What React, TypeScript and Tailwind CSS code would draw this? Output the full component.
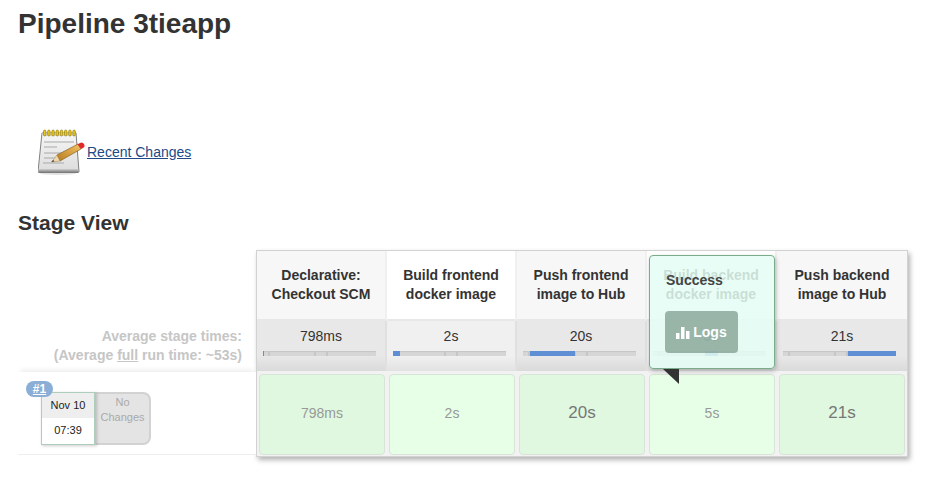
import React from "react";

const stages = [
  { name: ["Declarative:", "Checkout SCM"], avg: "798ms", blue: [0, 1], light: false, run: "798ms", big: false, cell: "bg-[#dff8df]" },
  { name: ["Build frontend", "docker image"], avg: "2s", blue: [0, 7], light: true, run: "2s", big: false, cell: "bg-[#e6ffe6]" },
  { name: ["Push frontend", "image to Hub"], avg: "20s", blue: [7, 52], light: false, run: "20s", big: true, cell: "bg-[#dff8df]" },
  { name: ["Build backend", "docker image"], avg: "5s", blue: [52, 65], light: true, run: "5s", big: false, cell: "bg-[#e6ffe6]" },
  { name: ["Push backend", "image to Hub"], avg: "21s", blue: [65, 113], light: false, run: "21s", big: true, cell: "bg-[#dff8df]" },
];

function Notepad() {
  return (
    <svg width="48" height="48" viewBox="0 0 48 48" className="shrink-0">
      <defs>
        <linearGradient id="pg" x1="0" y1="0" x2="0" y2="1">
          <stop offset="0" stopColor="#f6f6f6" />
          <stop offset="1" stopColor="#dcdcdc" />
        </linearGradient>
        <linearGradient id="pc" x1="0" y1="1" x2="1" y2="0">
          <stop offset="0" stopColor="#b97c20" />
          <stop offset="1" stopColor="#f2c264" />
        </linearGradient>
        <linearGradient id="pb" x1="0" y1="0" x2="0" y2="1">
          <stop offset="0" stopColor="#d0d0d0" />
          <stop offset="1" stopColor="#777" />
        </linearGradient>
      </defs>
      <ellipse cx="20" cy="45.500" rx="18" ry="1.500" fill="#e2e2e2" />
      <path d="M4 5H38L41 43.500A1 1 0 0 1 40 44.500H1A1 1 0 0 1 0 43.500Z" fill="url(#pg)" stroke="#808080" />
      <rect x="0.500" y="41" width="40" height="3.500" rx="1" fill="url(#pb)" />
      <rect x="4.500" y="5" width="33" height="3" fill="#d8d8d8" />
      {[5.500, 9.700, 13.900, 18.100, 22.300, 26.500, 30.700, 34.900].map((x) => (
        <rect key={x} x={x} y="2" width="2.400" height="6" rx="1.200" fill="#ecc81c" stroke="#8a7400" strokeWidth="0.6" />
      ))}
      <path d="M6 14H36M6 19H19M6 25H32M6 30H18M5 35H26" stroke="#a8a8a8" strokeWidth="1" />
      <path d="M19 27L40 16L43 21L22 33Z" fill="url(#pc)" stroke="#7a5518" strokeWidth="0.6" />
      <path d="M13.500 34L19 27L22 33Z" fill="#f0d9ac" stroke="#8a6a30" strokeWidth="0.4" />
      <path d="M13.500 34L15 32L16.500 33.300Z" fill="#333" />
      <path d="M39.500 16.200L42 15A2.500 2.500 0 0 1 45 20L43 21.100Z" fill="#e02a2a" />
    </svg>
  );
}

function Bar({ blue }: { blue: number[] }) {
  return (
    <div className="relative ml-[6px] h-[5px] w-[113px] overflow-hidden bg-[#d6d6d6] shadow-[inset_0_1px_1px_rgba(0,0,0,0.08)]">
      <div className="absolute left-[5px] top-0 h-full w-[2px] bg-[#c6c6c6]" />
      <div className="absolute left-[51px] top-0 h-full w-[2px] bg-[#c6c6c6]" />
      <div className="absolute left-[63px] top-0 h-full w-[2px] bg-[#c6c6c6]" />
      <div className="absolute top-0 h-full bg-[#5e8fd4]" style={{ left: blue[0], width: blue[1] - blue[0] }} />
    </div>
  );
}

export default function App() {
  return (
    <div className="min-h-[482px] bg-white pl-[18px] font-['Liberation_Sans',Arial,sans-serif] text-[#333]">
      <h1 className="pt-[9px] text-[28px] font-bold leading-[30px]">Pipeline 3tieapp</h1>
      <div className="ml-[20px] mt-[89px] flex h-[48px] items-center">
        <Notepad />
        <a href="#" className="ml-[1px] text-sm leading-4 text-[#204a87] underline">Recent Changes</a>
      </div>
      <h2 className="mt-[35px] text-[21px] font-bold leading-6">Stage View</h2>
      <div className="relative mt-[15px] flex w-[890px] items-start">
        <div className="w-[238px] shrink-0">
          <div className="h-[70px]" />
          <div className="flex h-[52px] flex-col items-end justify-center pb-[1px] pr-[14px] text-right text-sm font-bold leading-[19px] text-[#c6c6c6]">
            <div>Average stage times:</div>
            <div>(Average <span className="underline">full</span> run time: ~53s)</div>
          </div>
          <div className="relative h-[83px] border-b border-[#eee] bg-white shadow-[0_-5px_5px_-3px_rgba(0,0,0,0.08)]">
            <span className="absolute left-[8px] top-[9px] z-10 flex h-[16px] w-[27px] items-center justify-center rounded-full bg-[#8baed6] text-xs font-bold leading-none text-white underline">#1</span>
            <div className="absolute left-[23px] top-[20px] flex h-[53px] w-[110px]">
              <div className="z-[1] flex h-[53px] w-[55px] flex-col border border-r-2 border-[#aecdbc] text-center text-[11px] leading-none text-[#222] shadow-[1px_1px_3px_rgba(0,0,0,0.2)]">
                <div className="flex h-[25px] items-center justify-center bg-[#eee]">Nov 10</div>
                <div className="flex flex-1 items-center justify-center bg-white pb-[2px]">07:39</div>
              </div>
              <div className="h-[53px] w-[55px] rounded-r-[8px] border-2 border-l-0 border-[#d2d2d2] bg-[#e4e4e4] pt-[1px] text-center text-[11px] leading-[15px] text-[#aaa]">
                No<br />Changes
              </div>
            </div>
          </div>
        </div>
        <div className="w-[652px] shrink-0 border border-[#d2d2d2] bg-[#f0f0f0] shadow-[2px_3px_5px_rgba(0,0,0,0.3)]">
          <div className="grid grid-cols-5">
            {stages.map((s) => (
              <div key={s.name[0]} className={`flex h-[70px] flex-col items-center justify-center border-b-[2px] border-r-2 border-b-[#e8e8e8] border-r-[#f0f0f0] pb-[1px] text-sm font-bold leading-[19px] last:border-r-0 ${s.light ? "bg-white" : "bg-[#f7f7f7]"}`}>
                <div>{s.name[0]}</div>
                <div>{s.name[1]}</div>
              </div>
            ))}
          </div>
          <div className="grid grid-cols-5">
            {stages.map((s) => (
              <div key={s.avg} className={`h-[50px] border-r-2 border-[#e0e0e0] pt-[6px] text-center last:border-r-0 ${s.light ? "bg-[linear-gradient(#f0f0f0_70%,#e2e2e2)]" : "bg-[linear-gradient(#e8e8e8_70%,#dadada)]"}`}>
                <div className="mb-[6px] text-sm leading-[18px]">{s.avg}</div>
                <Bar blue={s.blue} />
              </div>
            ))}
          </div>
          <div className="grid grid-cols-5 bg-[#f2f2f2] pt-[2px]">
            {stages.map((s) => (
              <div key={s.run} className="px-[2px] pb-[1px] pt-[1px]">
                <div className={`flex h-[81px] items-center justify-center rounded-[4px] border border-[#d8e4d8] pb-[3px] ${s.cell} ${s.big ? "text-[17px] text-[#777]" : "text-sm text-[#999]"}`}>
                  {s.run}
                </div>
              </div>
            ))}
          </div>
        </div>
        <div className="absolute left-[631px] top-[5px] z-20 h-[114px] w-[126px] rounded-[4px] border border-[#7aab8a] bg-[#e4fdf3]/85 px-4 pt-[15px] shadow-[1px_2px_4px_rgba(0,0,0,0.25)]">
          <div className="text-sm font-bold leading-[18px] text-[#444]">Success</div>
          <div className="-ml-px mt-[22px] flex h-[42px] w-[73px] items-center justify-center gap-[3px] rounded-[4px] bg-[#6f8f80]/65 text-sm font-bold text-white">
            <svg width="14" height="13" viewBox="0 0 14 13" fill="white"><rect x="0" y="7" width="3.500" height="6" /><rect x="5" y="1" width="3.500" height="12" /><rect x="10" y="5" width="3.500" height="8" /></svg>
            Logs
          </div>
        </div>
        <div className="absolute left-[645px] top-[119px] z-20 h-0 w-0 border-l-[16px] border-t-[15px] border-l-transparent border-t-[#333]" />
      </div>
    </div>
  );
}
